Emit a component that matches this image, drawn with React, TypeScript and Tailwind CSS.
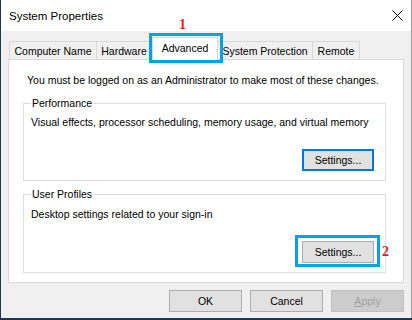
import React from "react";

const font = { fontFamily: '"Liberation Sans", Arial, sans-serif' };

function Tab({ label, w, selected, first }: { label: string; w: string; selected?: boolean; first?: boolean }) {
  if (selected) {
    return (
      <div
        className={`${w} h-[23px] -mb-[1px] relative z-10 bg-white border-l border-r border-t border-[#d9d9d9] flex items-center justify-center text-[10.5px] leading-[16px] text-black pb-[3px] whitespace-nowrap`}
      >
        {label}
      </div>
    );
  }
  return (
    <div
      className={`${w} h-[18px] bg-[#f0f0f0] border-t border-r ${first ? "border-l" : ""} border-[#d9d9d9] flex items-center justify-center text-[10.5px] leading-[16px] text-black pt-[1px] whitespace-nowrap`}
    >
      {label}
    </div>
  );
}

function Btn({ children, def, disabled, w }: { children: React.ReactNode; def?: boolean; disabled?: boolean; w: string }) {
  const cls = disabled
    ? "bg-[#cccccc] border border-[#bfbfbf] text-[#a0a0a0]"
    : def
    ? "bg-[#e1e1e1] border-2 border-[#0078d7] text-black"
    : "bg-[#e1e1e1] border border-[#adadad] text-black";
  return (
    <div className={`${w} h-[22px] ${cls} flex items-center justify-center text-[10.5px] leading-[16px]`}>{children}</div>
  );
}

export default function App() {
  return (
    <div className="w-[412px] h-[320px] bg-[#1e3650] relative overflow-hidden" style={font}>
      <div className="ml-[1px] w-[411px] h-[318px] border-r border-[#9c9c9c] flex flex-col bg-[#f0f0f0]">
        {/* Title bar */}
        <div className="h-[31px] bg-white flex items-center justify-between pl-[8px] pr-[8px]">
          <span className="text-[11.5px] leading-[16px] text-black">System Properties</span>
          <svg width="11" height="11" viewBox="0 0 11 11">
            <path d="M0.5 0.5 L10.5 10.5 M10.5 0.5 L0.5 10.5" stroke="#000" strokeWidth="1" fill="none" />
          </svg>
        </div>
        {/* Tabs */}
        <div className="flex items-end pt-[6px] ml-[8px] h-[28px]">
          <Tab label="Computer Name" w="w-[88px]" first />
          <Tab label="Hardware" w="w-[55px]" />
          <Tab label="Advanced" w="w-[66px]" selected />
          <Tab label="System Protection" w="w-[95px]" />
          <Tab label="Remote" w="w-[47px]" />
        </div>
        {/* Panel */}
        <div className="ml-[7px] w-[396px] h-[224px] bg-white border border-[#d9d9d9] flex flex-col">
          <div className="pt-[12px] pl-[18px] text-[10.5px] leading-[16px] text-black whitespace-nowrap">
            You must be logged on as an Administrator to make most of these changes.
          </div>
          <fieldset className="mt-[7px] ml-[14px] w-[363px] min-w-0 border border-[#dcdcdc] px-[7px] pb-[9px]">
            <legend className="px-[1px] text-[10.5px] leading-[16px] text-black">Performance</legend>
            <div className="mt-[3px] text-[10.5px] leading-[16px] text-black whitespace-nowrap">
              Visual effects, processor scheduling, memory usage, and virtual memory
            </div>
            <div className="mt-[19px] flex justify-end mr-[4px]">
              <Btn def w="w-[72px]">Settings...</Btn>
            </div>
          </fieldset>
          <fieldset className="mt-[5px] ml-[14px] w-[363px] min-w-0 border border-[#dcdcdc] px-[7px] pb-[9px]">
            <legend className="px-[1px] text-[10.5px] leading-[16px] text-black">User Profiles</legend>
            <div className="mt-[4px] text-[10.5px] leading-[16px] text-black whitespace-nowrap">
              Desktop settings related to your sign-in
            </div>
            <div className="mt-[19px] flex justify-end mr-[4px]">
              <Btn w="w-[72px]">Settings...</Btn>
            </div>
          </fieldset>
        </div>
        {/* Bottom buttons */}
        <div className="mt-[7px] flex justify-end gap-[8px] pr-[7px]">
          <Btn w="w-[73px]">OK</Btn>
          <Btn w="w-[73px]">Cancel</Btn>
          <Btn disabled w="w-[73px]">
            <span>
              <span className="underline">A</span>pply
            </span>
          </Btn>
        </div>
      </div>

      {/* Annotations */}
      <div className="absolute left-[149px] top-[33px] w-[74px] h-[30px] border-[3px] border-[#00a2e8] z-20" />
      <div
        className="absolute left-[179px] top-[17px] text-[14px] leading-[16px] font-bold text-[#ed1c24] z-20"
        style={{ fontFamily: '"Liberation Serif", "Times New Roman", serif' }}
      >
        1
      </div>
      <div className="absolute left-[295px] top-[235px] w-[85px] h-[32px] border-[3px] border-[#00a2e8] z-20" />
      <div
        className="absolute left-[382px] top-[244px] text-[14px] leading-[16px] font-bold text-[#ed1c24] z-20"
        style={{ fontFamily: '"Liberation Serif", "Times New Roman", serif' }}
      >
        2
      </div>
    </div>
  );
}
